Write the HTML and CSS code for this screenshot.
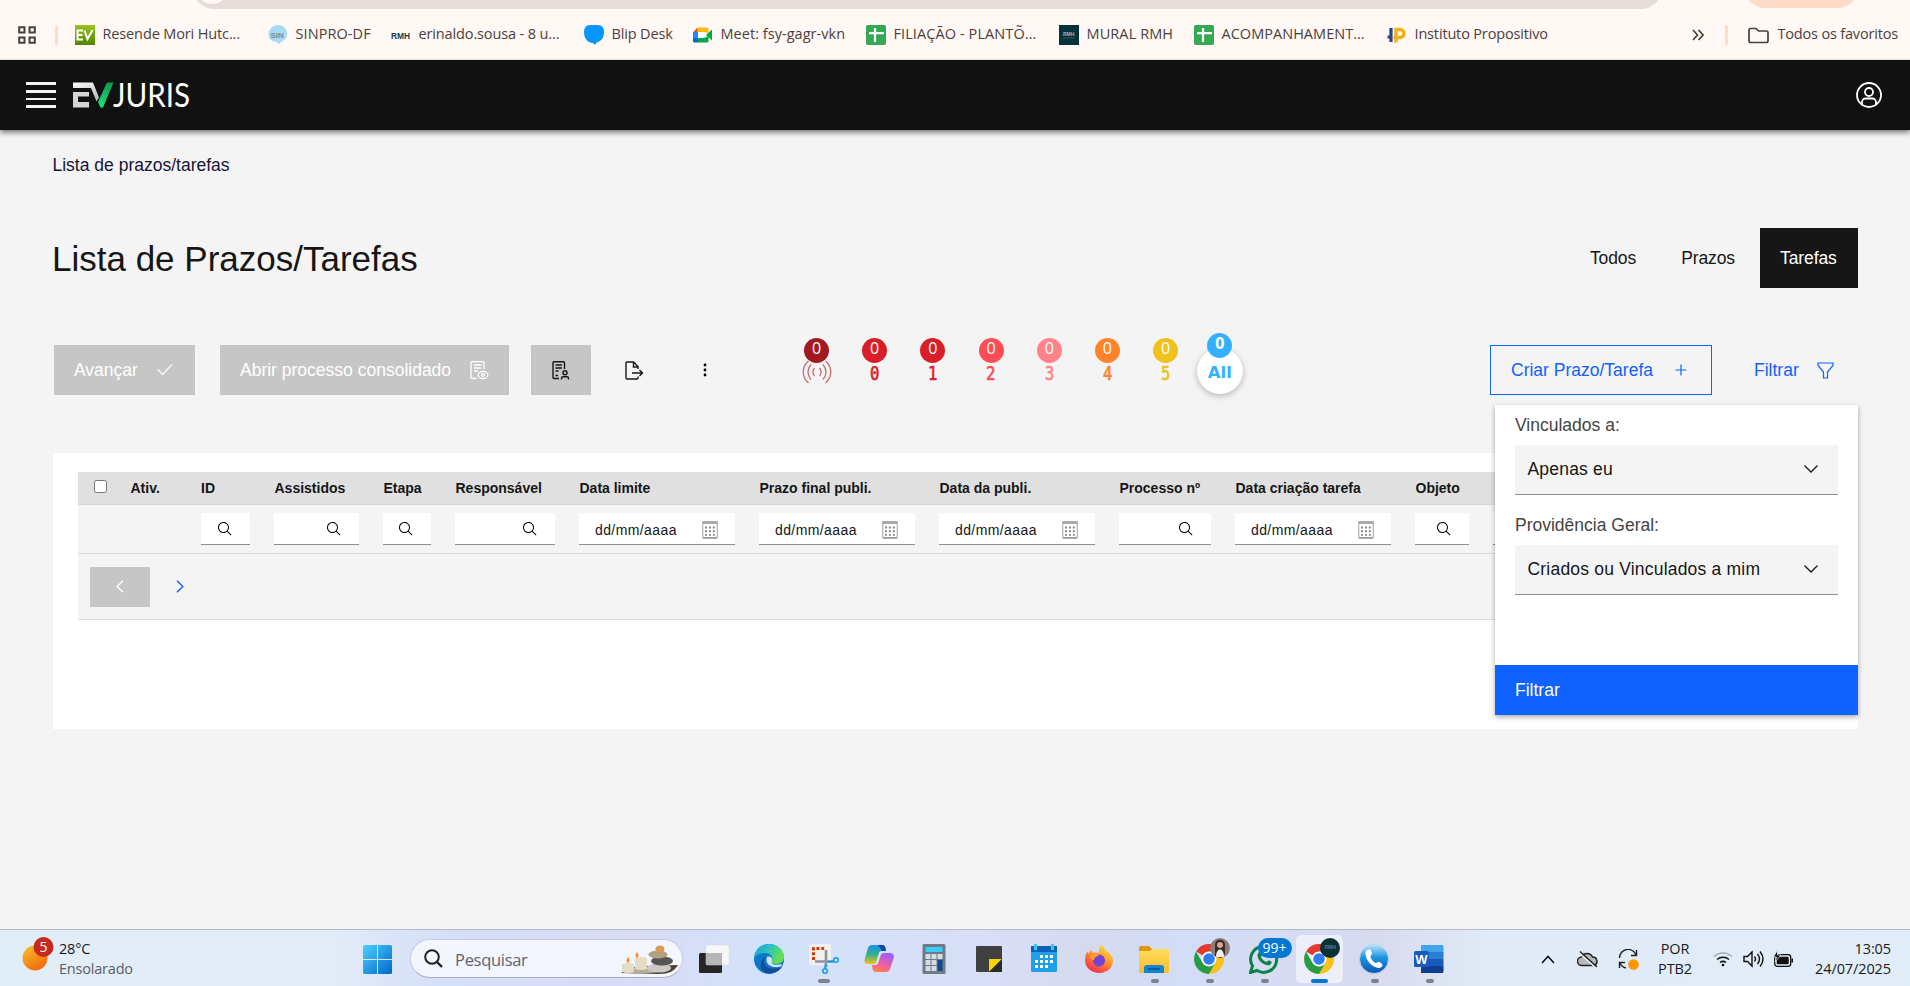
FILE: index.html
```html
<!DOCTYPE html>
<html lang="pt-BR">
<head>
<meta charset="utf-8">
<title>Lista de Prazos/Tarefas</title>
<link rel="stylesheet" href="styles.css">
</head>
<body>
<svg class="defs" aria-hidden="true">
  <defs>
    <linearGradient id="gEv" x1="0" y1="0" x2="0" y2="1"><stop offset="0" stop-color="#9ac51d"/><stop offset="1" stop-color="#4e8500"/></linearGradient>
    <linearGradient id="gSun" x1="0" y1="0" x2=".6" y2="1"><stop offset="0" stop-color="#f4c430"/><stop offset="1" stop-color="#f36a0c"/></linearGradient>
    <linearGradient id="gWin" x1="0" y1="0" x2="1" y2="1"><stop offset="0" stop-color="#4cd0fb"/><stop offset="1" stop-color="#0067cc"/></linearGradient>
    <linearGradient id="gGray" x1="0" y1="0" x2=".4" y2="1"><stop offset="0" stop-color="#fff"/><stop offset="1" stop-color="#bbb"/></linearGradient>
    <linearGradient id="gGreen" x1="0" y1="0" x2="0" y2="1"><stop offset="0" stop-color="#0a9a50"/><stop offset="1" stop-color="#25e07a"/></linearGradient>
    <linearGradient id="gEdge" x1="0" y1="0" x2="1" y2=".4"><stop offset="0" stop-color="#1b9de2"/><stop offset=".5" stop-color="#2cc3c0"/><stop offset="1" stop-color="#66e052"/></linearGradient>
    <linearGradient id="gCopA" x1="0" y1="0" x2="0" y2="1"><stop offset="0" stop-color="#1b8ff0"/><stop offset=".5" stop-color="#2fb28a"/><stop offset="1" stop-color="#f2c21b"/></linearGradient>
    <linearGradient id="gCopB" x1="0" y1="1" x2=".5" y2="0"><stop offset="0" stop-color="#ff8a3c"/><stop offset=".5" stop-color="#f0609c"/><stop offset="1" stop-color="#a55df0"/></linearGradient>
    <linearGradient id="gFox" x1=".8" y1="0" x2=".2" y2="1"><stop offset="0" stop-color="#ffe43d"/><stop offset=".5" stop-color="#ff8a2a"/><stop offset="1" stop-color="#f0205a"/></linearGradient>
    <linearGradient id="gFold" x1="0" y1="0" x2="0" y2="1"><stop offset="0" stop-color="#ffdb5c"/><stop offset="1" stop-color="#f9bd2c"/></linearGradient>
    <linearGradient id="gPhone" x1="0" y1="0" x2="0" y2="1"><stop offset="0" stop-color="#b5e6fa"/><stop offset=".45" stop-color="#1b95e0"/><stop offset="1" stop-color="#0a55b0"/></linearGradient>
    <symbol id="search" viewBox="0 0 32 32"><path d="M29 27.6l-7.6-7.6A11 11 0 1 0 20 21.400L27.600 29zM4 13a9 9 0 1 1 9 9 9 9 0 0 1-9-9z"/></symbol>
    <symbol id="chev" viewBox="0 0 16 16"><path d="M1.500 4.500 8 11l6.500-6.500" fill="none" stroke="currentColor" stroke-width="1.300"/></symbol>
    <symbol id="cal" viewBox="0 0 16 19"><rect x=".7" y="1.700" width="14.600" height="16" rx="1" fill="#fff" stroke="#b5b5b5" stroke-width="1.300"/><path d="M.5 2.500h15" stroke="#aaa" stroke-width="3"/><path d="M1 18h14" stroke="#888" stroke-width="1.200"/><path d="M3 7.500h10M3 11.200h10M3 14.900h10" stroke="#888" stroke-width="1.900" stroke-dasharray="2 1.900"/></symbol>
    <symbol id="sheet" viewBox="0 0 20 20"><rect width="20" height="20" rx="2" fill="#34a853"/><path d="M3 8.200h15M9 3v14" stroke="#fff" stroke-width="2.200"/></symbol>
    <symbol id="chrome" viewBox="0 0 30 30"><path d="M15 15 2.010 7.500A15 15 0 0 1 28 7.500H15z" fill="#e33b2e"/><path d="M15 15 28 7.500A15 15 0 0 1 15 30l6.500-11.300z" fill="#fbc116"/><path d="M2.010 7.500A15 15 0 0 0 15 30l6.500-11.250L15 15 8.500 18.750z" fill="#2a9c46"/><circle cx="15" cy="15" r="7.500" fill="#fff"/><circle cx="15" cy="15" r="5.800" fill="#2d7ff0"/></symbol>
  </defs>
</svg>

<div class="browser">
  <div class="omnibox"><span class="omni-site"></span></div>
  <div class="profile-chip"></div>
  <div class="bookmarks">
    <svg class="apps" viewBox="0 0 18 18"><path d="M1.200 1.200h5.300v5.300H1.200zM11.500 1.200h5.300v5.300h-5.300zM1.200 11.500h5.300v5.300H1.200zM11.500 11.500h5.300v5.300h-5.300z" fill="none" stroke="#4b3f3c" stroke-width="2"/></svg>
    <span class="bm-div"></span>
    <div class="bm-list">
      <div class="bm"><svg viewBox="0 0 20 20"><rect width="20" height="20" fill="url(#gEv)"/><path d="M8 5.500H2.500v9H8M3 10h4.500M9.500 5.500l3 8.500 5-9" fill="none" stroke="#fff" stroke-width="2"/></svg><span class="t1">Resende Mori Hutc...</span></div>
      <div class="bm"><svg viewBox="0 0 20 20"><path d="M10 0c6 0 9 4 9 9s-4 7-6 8c-1 .6-1 2-2 2s-1-1.500-3-2C3 16 .5 14 .5 9.500S4 0 10 0z" fill="#a5dbf5"/><text x="2.500" y="13" class="sin">SIN</text></svg><span class="t2">SINPRO-DF</span></div>
      <div class="bm"><svg viewBox="0 0 20 20"><text x="0" y="13.500" class="rmh" textLength="19" lengthAdjust="spacingAndGlyphs">RMH</text></svg><span class="t3">erinaldo.sousa - 8 u...</span></div>
      <div class="bm"><svg viewBox="0 0 20 20"><path d="M6 0h8c4 0 6 3 6 7 0 6-3 9.500-7.500 10.500L11 20l-2-2C3 17.500 0 13 0 7c0-4 2-7 6-7z" fill="#0796ff"/></svg><span class="t4">Blip Desk</span></div>
      <div class="bm"><svg viewBox="0 0 20 20"><path d="M4.500 2.500h9a2 2 0 0 1 2 2V8l-4-1H4.500z" fill="#fbbc04"/><path d="M4.500 2.500v5H0z" fill="#ea4335"/><path d="M0 7h5v6H0z" fill="#2684fc"/><path d="M0 13h5v4.500H1.500A1.500 1.500 0 0 1 0 16z" fill="#0066da"/><path d="M5 13h6l4.500-2V16a1.500 1.500 0 0 1-1.500 1.500H5zM13 10l6-5.500v11z" fill="#00a846"/><path d="M5 7h6v6H5z" fill="#fff"/></svg><span class="t5">Meet: fsy-gagr-vkn</span></div>
      <div class="bm"><svg viewBox="0 0 20 20"><use href="#sheet"/></svg><span class="t6">FILIAÇÃO - PLANTÕ...</span></div>
      <div class="bm"><svg viewBox="0 0 20 20"><rect width="20" height="20" fill="#06323a"/><text x="4" y="10.500" class="mini">RMH</text><path d="M4 13h12" stroke="#3e6368" stroke-width=".8"/></svg><span class="t7">MURAL RMH</span></div>
      <div class="bm"><svg viewBox="0 0 20 20"><use href="#sheet"/></svg><span class="t8">ACOMPANHAMENT...</span></div>
      <div class="bm"><svg viewBox="0 0 20 20"><path d="M4 3v14M.5 12H4" stroke="#2a4383" stroke-width="3.200" fill="none"/><path d="M9 17.500V4.500h4a4 4 0 0 1 0 8H6.500" stroke="#f0b016" stroke-width="3.400" fill="none"/></svg><span class="t9">Instituto Propositivo</span></div>
    </div>
    <svg class="more" viewBox="0 0 12 12"><path d="M1 1l4.500 5L1 11M6.500 1 11 6l-4.500 5" fill="none" stroke="#4b3f3c" stroke-width="1.700"/></svg>
    <span class="bm-div"></span>
    <svg class="folder" viewBox="0 0 21 17"><path d="M1 3a1.500 1.500 0 0 1 1.500-1.500H8l2.500 2.500h8A1.500 1.500 0 0 1 20 5.500V14a1.500 1.500 0 0 1-1.500 1.500h-16A1.500 1.500 0 0 1 1 14z" fill="none" stroke="#4b3f3c" stroke-width="1.700"/></svg>
    <span class="all-fav">Todos os favoritos</span>
  </div>
</div>

<header class="topbar">
  <div class="burger"><i></i><i></i><i></i><i></i></div>
  <div class="logo">
    <svg viewBox="0 0 41 26"><path d="M0 .5h20l6 15-2.500 4L18 6H0z" fill="url(#gGray)"/><path d="M0 10h16v4.500H5V20h11v5.500H0z" fill="#d5d5d5"/><path d="M34 .5h6.500L30 25.500h-2.500L25 20z" fill="url(#gGreen)"/></svg>
    <svg class="juris" viewBox="0 0 80 26"><text x="0" y="25" textLength="77" lengthAdjust="spacingAndGlyphs">JURIS</text></svg>
  </div>
  <svg class="user" viewBox="0 0 26 26" fill="none" stroke="#fff" stroke-width="1.800"><circle cx="13" cy="13" r="12"/><circle cx="13" cy="10" r="4"/><path d="M6 22.500V20a3.500 3.500 0 0 1 3.500-3.500h7A3.500 3.500 0 0 1 20 20v2.500"/></svg>
</header>

<main class="page">
  <nav class="crumb">Lista de prazos/tarefas</nav>
  <div class="title-row">
    <h1>Lista de Prazos/Tarefas</h1>
    <div class="tabs"><span>Todos</span><span>Prazos</span><span class="on">Tarefas</span></div>
  </div>

  <div class="toolbar">
    <button class="btn gray adv">Avançar<svg width="16" height="12" viewBox="0 0 16 12"><path d="M.7 5.500 5.500 10.500 15 .7" fill="none" stroke="#fff" stroke-width="1.200"/></svg></button>
    <button class="btn gray open">Abrir processo consolidado<svg width="19" height="19" viewBox="0 0 19 19" fill="none" stroke="#fff" stroke-width="1.300"><path d="M6.500 17.500H2a1 1 0 0 1-1-1V1.700a1 1 0 0 1 1-1h11a1 1 0 0 1 1 1V8M4 4h7.500M4 7h7.500M4 10h4"/><ellipse cx="13" cy="14" rx="4.800" ry="3.600"/><circle cx="13" cy="14" r="1.300"/></svg></button>
    <button class="btn gray user-doc"><svg width="18" height="19" viewBox="0 0 18 19" fill="none" stroke="#161616" stroke-width="1.400"><path d="M7 17.500H2a1 1 0 0 1-1-1V1.700a1 1 0 0 1 1-1h9.500a1 1 0 0 1 1 1V8M3.500 4h6.500M3.500 7h6.500M3.500 10h3M3.500 14.500H6"/><circle cx="13" cy="11.800" r="2"/><path d="M9.500 18.500v-1.200a1.600 1.600 0 0 1 1.600-1.600h3.800a1.600 1.600 0 0 1 1.600 1.600v1.200"/></svg></button>
    <svg class="export" viewBox="0 0 19 19" fill="none" stroke="#161616" stroke-width="1.400"><path d="M13 15.500V17a1 1 0 0 1-1 1H2a1 1 0 0 1-1-1V2a1 1 0 0 1 1-1h6.500L13 5.500V8M8.500 1v5H13M7 12h10M14.500 9l3 3-3 3"/></svg>
    <svg class="dots" viewBox="0 0 4 14"><circle cx="2" cy="2" r="1.400"/><circle cx="2" cy="7" r="1.400"/><circle cx="2" cy="12" r="1.400"/></svg>

    <div class="levels">
      <div class="lv c0"><b>0</b><svg viewBox="0 0 30 24" fill="none" stroke="#c26c70" stroke-width="1.300"><path d="M6.500 1C-.5 7-.5 17 6.500 23M9 4.500c-4 4.500-4 10.500 0 15M12.500 8c-2 2.500-2 5.500 0 8M17.500 8c2 2.500 2 5.500 0 8M21 4.500c4 4.500 4 10.500 0 15M23.500 1c7 6 7 16 0 22"/></svg></div>
      <div class="lv c1"><b>0</b><em>0</em></div>
      <div class="lv c1"><b>0</b><em>1</em></div>
      <div class="lv c2"><b>0</b><em>2</em></div>
      <div class="lv c3"><b>0</b><em>3</em></div>
      <div class="lv c4"><b>0</b><em>4</em></div>
      <div class="lv c5"><b>0</b><em>5</em></div>
      <div class="all"><span>All</span><b>0</b></div>
    </div>

    <button class="btn outline">Criar Prazo/Tarefa<svg width="12" height="12" viewBox="0 0 12 12"><path d="M6 .5v11M.5 6h11" stroke="#0f62fe" stroke-width="1.200"/></svg></button>
    <button class="btn ghost">Filtrar<svg width="17" height="17" viewBox="0 0 17 17"><path d="M1 1h15v2.500L10.500 10v6h-4v-6L1 3.500z" fill="none" stroke="#0f62fe" stroke-width="1.200"/></svg></button>
  </div>

  <section class="panel">
    <div class="table">
      <div class="row head">
        <span class="ck"><i></i></span><span>Ativ.</span><span>ID</span><span>Assistidos</span><span>Etapa</span><span>Responsável</span><span>Data limite</span><span>Prazo final publi.</span><span>Data da publi.</span><span>Processo nº</span><span>Data criação tarefa</span><span>Objeto</span><span></span>
      </div>
      <div class="row filters">
        <span></span><span></span>
        <div class="in"><svg><use href="#search"/></svg></div>
        <div class="in"><svg><use href="#search"/></svg></div>
        <div class="in"><svg><use href="#search"/></svg></div>
        <div class="in"><svg><use href="#search"/></svg></div>
        <div class="in date">dd/mm/aaaa<svg><use href="#cal"/></svg></div>
        <div class="in date">dd/mm/aaaa<svg><use href="#cal"/></svg></div>
        <div class="in date">dd/mm/aaaa<svg><use href="#cal"/></svg></div>
        <div class="in"><svg><use href="#search"/></svg></div>
        <div class="in date">dd/mm/aaaa<svg><use href="#cal"/></svg></div>
        <div class="in"><svg><use href="#search"/></svg></div>
        <div class="in"></div>
      </div>
      <div class="pager">
        <button class="prev"><svg width="8" height="13" viewBox="0 0 8 13"><path d="M7 .7 1.200 6.500 7 12.300" fill="none" stroke="#fff" stroke-width="1.300"/></svg></button>
        <svg width="8" height="13" viewBox="0 0 8 13"><path d="M1 .7l5.800 5.800L1 12.300" fill="none" stroke="#0f62fe" stroke-width="1.400"/></svg>
      </div>
    </div>
  </section>

  <aside class="popup">
    <label>Vinculados a:</label>
    <div class="select">Apenas eu<svg><use href="#chev"/></svg></div>
    <label>Providência Geral:</label>
    <div class="select">Criados ou Vinculados a mim<svg><use href="#chev"/></svg></div>
    <button class="apply">Filtrar</button>
  </aside>
</main>

<footer class="taskbar">
  <div class="weather">
    <svg width="40" height="42" viewBox="0 0 40 42"><circle cx="15" cy="27" r="12.500" fill="url(#gSun)"/><circle cx="23.500" cy="16" r="10" fill="#c42b1c"/><text x="23.500" y="21" class="wbadge">5</text></svg>
    <div class="wtext"><span>28°C</span><span>Ensolarado</span></div>
  </div>
  <svg class="win" viewBox="0 0 29 29"><path d="M1.500 0H14v14H0V1.500A1.500 1.500 0 0 1 1.500 0zM15 0h12.500A1.500 1.500 0 0 1 29 1.500V14H15zM0 15h14v14H1.500A1.500 1.500 0 0 1 0 27.500zM15 15h14v12.500a1.500 1.500 0 0 1-1.500 1.500H15z" fill="url(#gWin)"/></svg>
  <div class="search">
    <svg width="19" height="19" viewBox="0 0 19 19"><circle cx="8" cy="8" r="6.800" fill="none" stroke="#222" stroke-width="2"/><path d="m13 13 5 5" stroke="#222" stroke-width="2.400"/></svg>
    <span>Pesquisar</span>
    <svg class="zen" viewBox="0 0 58 30"><path d="M0 28c8-7 22-7 28-7s20-1 29-1c-4 6-8 9-20 9z" fill="#4a4234"/><path d="M2 27c6 2 22 2 34 0l-8-4H6z" fill="#b5ae98"/><path d="M1 19q6-2 12 0v8q-6 2-12 0zM14 13q6-2 12 0v11q-6 2-12 0z" fill="#e5dcc6"/><path d="M7 12q3 4 0 6-3-2 0-6zM16 7q3 4 0 6-3-2 0-6z" fill="#f58a2c"/><ellipse cx="38" cy="23" rx="12" ry="4.500" fill="#ccc9c6"/><ellipse cx="41" cy="16" rx="11" ry="4.500" fill="#555554"/><ellipse cx="37" cy="9.500" rx="9.500" ry="4" fill="#b3a083"/><ellipse cx="39" cy="4" rx="4.500" ry="3.500" fill="#d69b5d"/></svg>
  </div>
  <div class="apps-row">
    <div class="app"><svg viewBox="0 0 30 30"><rect y="9" width="23" height="20" rx="1.500" fill="#252525"/><rect x="7" y="1" width="23" height="20" rx="1.500" fill="#f7f7f7" stroke="#ddd" stroke-width=".5"/><rect x="7" y="9" width="16" height="12" fill="#b6b6b6"/></svg></div>
    <div class="app"><svg viewBox="0 0 30 30"><circle cx="15" cy="15" r="15" fill="#0b78c8"/><path d="M0 14C1 5 7 0 15 0c9 0 15 6 15 13 0 5-4 7-8 7-3 0-5-1-4-3 2-4-2-8-7-8C6 9 2 11 0 14z" fill="url(#gEdge)"/><path d="M10 17c0 6 6 10 18 6-5 7-15 9-20 3-3-4-1-11 4-13-1 1-2 2-2 4z" fill="#124e9c"/><path d="M13 13c3-1.500 6 .5 5 4-1 3 2 5 10 3l-1 2.500c-8 2.500-17-2-14-9.500z" fill="#d5def6"/></svg></div>
    <div class="app run"><svg viewBox="0 0 30 30"><rect width="22" height="21" rx="2" fill="#f0f0f0"/><path d="M4.500 16V4.500h12" fill="none" stroke="#d83b01" stroke-width="3" stroke-dasharray="3 1.800"/><path d="M17 6v17M6 17.500h19" stroke="#8d939b" stroke-width="2.600"/><circle cx="27" cy="16" r="2.300" fill="none" stroke="#1c9de0" stroke-width="1.600"/><circle cx="16" cy="27" r="2.300" fill="none" stroke="#1c9de0" stroke-width="1.600"/><path d="m19 18 6-1M17 20l-1 5" stroke="#1c9de0" stroke-width="2"/></svg></div>
    <div class="app"><svg viewBox="0 0 30 30"><path d="M8 1h10c2 0 3 1 3.500 3L22 7h-4c-2 0-3 1-3.500 3l-2 7c-.5 2-1.500 3-4 3H4c-3 0-4-2-3.300-5L4 4c.7-2 2-3 4-3z" fill="url(#gCopA)"/><path d="M22 28H12c-2 0-3-1-3.500-3L8 21h3c2 0 3-1 3.500-3l2-6c.5-2 1.500-3 4-3H26c3 0 4.500 2 3.700 5L26 25c-.7 2-2 3-4 3z" fill="url(#gCopB)"/><path d="M14 1h4c2 0 3 1 3.500 3L22 7h-4z" fill="#1447ae"/></svg></div>
    <div class="app"><svg viewBox="0 0 30 30"><rect x="3.500" width="23" height="30" rx="1.500" fill="#6e7a85"/><path d="M6.500 3h17v5h-17z" fill="#3ccbf4"/><path d="M6.500 10h5v5h-5zM12.500 10h5v5h-5zM18.500 10h5v5h-5zM6.500 16h5v5h-5zM12.500 16h5v5h-5zM6.500 22h5v5h-5zM12.500 22h5v5h-5z" fill="#d5dde3"/><path d="M18.500 16h5v11h-5z" fill="#124b8d"/></svg></div>
    <div class="app"><svg viewBox="0 0 30 30"><rect x="2" y="2" width="26" height="26" rx="1" fill="#404040"/><path d="M15 15h13L15 28z" fill="#fdd400"/><path d="M28 15v13H15z" fill="#2b2b2b"/></svg></div>
    <div class="app"><svg viewBox="0 0 30 30"><rect x="2" y="2" width="26" height="26" rx="1.500" fill="#1e9fe8"/><path d="M2 2h26v6H2z" fill="#0a62b5"/><path d="M6.500 0v6M23.500 0v6" stroke="#45c4f2" stroke-width="3"/><path d="M11 12.500h13M6 17.500h18M6 22.500h13" stroke="#fff" stroke-width="3" stroke-dasharray="3 2"/></svg></div>
    <div class="app"><svg viewBox="0 0 30 30"><path d="M17 1c3 2 4 4 5 6 3 1 7 5 7 10 0 7-6 12-13.500 12S1 24 1 16c0-4 1-7 3-9v3l3-4 2 3c2-1 4-1 6 0 0-3 0-6 2-8z" fill="url(#gFox)"/><circle cx="15" cy="16.500" r="6" fill="#7542d5"/><path d="M6 12c3-3 7-2 9 0-3 0-5 2-5 4-2 0-4-2-4-4z" fill="#ffa22b"/></svg></div>
    <div class="app run"><svg viewBox="0 0 30 30"><path d="M0 4a2 2 0 0 1 2-2h8l3 3v4H0z" fill="#dd9a0e"/><path d="M0 7h11l2-2h15a2 2 0 0 1 2 2v21a1 1 0 0 1-1 1H1a1 1 0 0 1-1-1z" fill="url(#gFold)"/><path d="M5 29v-5a3 3 0 0 1 3-3h14a3 3 0 0 1 3 3v5z" fill="#1583d3"/><path d="M9 25h12" stroke="#0b4e93" stroke-width="1.600"/></svg></div>
    <div class="app run"><svg viewBox="0 0 30 30"><use href="#chrome"/></svg><span class="avatar"><svg viewBox="0 0 20 20"><circle cx="10" cy="10" r="10" fill="#8d7c78"/><path d="M5 18V7c0-7 10-7 10 0v9l-4 4z" fill="#3a2c28"/><circle cx="10" cy="7" r="3" fill="#d7a78e"/><path d="M6 19c0-10 8-10 8 0z" fill="#eee"/></svg></span></div>
    <div class="app run"><svg viewBox="0 0 30 30"><path d="M1.500 28.500 3.500 22A13 13 0 1 1 8 26.500z" fill="none" stroke="#0d8247" stroke-width="3"/><path d="M10 8c2-1 2 0 3 2 .7 1.500-1 2-1 3 1 2 3 4 5 5 1 0 2-2 3-1.500 3 1 3 1.500 2 3.500-3 4-13-2-13.500-8 0-2 .5-3 1.500-4z" fill="#0d8247"/></svg><span class="count">99+</span></div>
    <div class="app run active"><svg viewBox="0 0 30 30"><use href="#chrome"/></svg><span class="avatar"><svg viewBox="0 0 20 20"><circle cx="10" cy="10" r="10" fill="#0b3134"/><text x="4.500" y="11" class="mini dim">RMH</text></svg></span></div>
    <div class="app run"><svg viewBox="0 0 30 30"><circle cx="15" cy="15" r="14.500" fill="url(#gPhone)" stroke="#bcd3ec"/><path d="M8 6c3-2 4 0 5 3 .5 2-2 2-1.500 4 1 3 3 5 5 6 2 .5 2-2 4-1 3 2 4 3 2 5-6 4-16-6-16-13 0-2 0-3 1.500-4z" fill="#fff"/></svg></div>
    <div class="app run"><svg viewBox="0 0 30 30"><path d="M7 1h21a1.500 1.500 0 0 1 1.500 1.500V9H7z" fill="#41a5ee"/><path d="M7 8h22.500v7H7z" fill="#2b7cd3"/><path d="M7 15h22.500v7H7z" fill="#185abd"/><path d="M7 22h22.500v5.500A1.500 1.500 0 0 1 28 29H7z" fill="#103f91"/><rect y="7" width="15" height="16" rx="1.500" fill="#185abd"/><text x="7.500" y="19.500" class="word">W</text></svg></div>
  </div>
  <div class="tray">
    <svg class="up" viewBox="0 0 14 9"><path d="m1 8 6-6.500L13 8" fill="none" stroke="#111" stroke-width="1.600"/></svg>
    <svg class="cloud" viewBox="0 0 21 17"><path d="M5 14.500a4.200 4.200 0 0 1-.5-8.500A6 6 0 0 1 15.500 6a4.300 4.300 0 0 1 1 8.500z" fill="#b5b8bc" stroke="#222" stroke-width="1.500"/><path d="m1.500 1.500 17 15" stroke="#e8eff8" stroke-width="1.600"/><path d="m3 .5 17 15.500" stroke="#222" stroke-width="1.400"/></svg>
    <svg class="sync" viewBox="0 0 21 21"><path d="M1.500 9A8.500 8.500 0 0 1 18 6M18.500 1v5.500H13M8 19a8.500 8.500 0 0 1-6-5M1.500 19v-5.500H7" fill="none" stroke="#222" stroke-width="1.400"/><circle cx="15.500" cy="15.500" r="5.300" fill="#ff9500"/></svg>
    <div class="two lang"><span>POR</span><span>PTB2</span></div>
    <svg class="wifi" viewBox="0 0 20 16" fill="none" stroke="#111" stroke-width="1.500"><path d="M1 5.500a13 13 0 0 1 18 0" stroke="#a6adb5"/><path d="M4 8.500a9 9 0 0 1 12 0M7 11.500a5 5 0 0 1 6 0"/><circle cx="10" cy="14" r="1.300" fill="#111" stroke="none"/></svg>
    <svg class="snd" viewBox="0 0 21 18" fill="none" stroke="#111" stroke-width="1.400"><path d="M1 6.500h3.500L9 2v14l-4.500-4.500H1z"/><path d="M11.500 6.500q2 2.500 0 5M14.500 4q4 5 0 10M17 1.500q6 7.500 0 15"/></svg>
    <svg class="bat" viewBox="0 0 21 18"><rect x="1.700" y="4.700" width="16" height="11.600" rx="2.500" fill="none" stroke="#111" stroke-width="1.300"/><rect x="3.700" y="6.700" width="12" height="7.600" rx="1" fill="#111"/><path d="M18.500 8.500h1.500v4h-1.500z" fill="#111"/><path d="M4.500 0 .5 7h3L2 12l6-7H4.500z" fill="#111" stroke="#e6eff8" stroke-width=".8"/></svg>
    <div class="two clock"><span>13:05</span><span>24/07/2025</span></div>
  </div>
</footer>
</body>
</html>
```
FILE: styles.css
```css
* { box-sizing: border-box; }
body {
  margin: 0;
  width: 1910px;
  height: 986px;
  overflow: hidden;
  display: flex;
  flex-direction: column;
  background: #f4f4f4;
  font-family: "Liberation Sans", Arial, sans-serif;
  font-size: 17.5px;
  color: #161616;
}
svg { display: block; flex: none; }
.defs { position: absolute; width: 0; height: 0; }

/* browser chrome */
.browser {
  position: relative;
  flex: none;
  height: 60px;
  background: #fff8f5;
  border-bottom: 1px solid #eeddd5;
  font-family: "Open Sans", "Noto Sans", sans-serif;
  font-size: 14.5px;
  color: #4b3f3c;
}
.omnibox { position: absolute; left: 193px; top: -33px; width: 1469px; height: 42px; border-radius: 21px; background: #e8dcda; }
.omni-site { position: absolute; left: 3px; bottom: 5px; width: 32px; height: 32px; border-radius: 50%; background: #fff8f5; }
.profile-chip { position: absolute; left: 1745px; top: -32px; width: 113px; height: 40px; border-radius: 20px; background: #ffdbc9; }
.bookmarks { display: flex; align-items: center; height: 60px; padding: 9px 0 0 18px; }
.apps { width: 18px; height: 18px; margin-right: 19px; }
.bm-div { width: 3px; height: 20px; border-radius: 2px; background: #ffdbc9; }
.bm-list {
  display: grid;
  grid-template-columns: 193px 123px 193px 109px 173px 193px 135px 193px 305px;
  margin-left: 17px;
}
.bm { display: flex; align-items: center; gap: 7.500px; white-space: nowrap; }
.bm svg { width: 20px; height: 20px; }
.bm span, .all-fav { margin-top: -2px; white-space: nowrap; line-height: 20px; }
.t1 { letter-spacing: -0.13px; }
.t2 { letter-spacing: .08px; }
.t3 { letter-spacing: -0.13px; }
.t4 { letter-spacing: -0.15px; }
.t5 { letter-spacing: .04px; }
.t6 { letter-spacing: .09px; }
.t7 { letter-spacing: .1px; }
.t8 { letter-spacing: .03px; }
.t9 { letter-spacing: -0.16px; }
.all-fav { letter-spacing: -0.18px; }
.more { width: 12px; height: 12px; margin-right: 21px; }
.folder { width: 21px; height: 17px; margin: 1px 9px 0 19.500px; }
.sin { font: bold 8px "Liberation Sans"; fill: #7a8f9c; }
.rmh { font: bold 9px "Liberation Sans"; fill: #123b3c; }
.mini { font: bold 5px "Liberation Sans"; fill: #a5b9bb; }
.dim { fill: #5d7a7c; }

/* application header */
.topbar {
  flex: none;
  display: flex;
  align-items: center;
  height: 70px;
  padding: 0 28px 0 26px;
  background: #111;
  box-shadow: 0 2px 6px rgba(0, 0, 0, .6);
}
.burger { display: grid; gap: 5px; width: 30px; }
.burger i { height: 2.700px; background: #f4f4f4; }
.logo { display: flex; align-items: center; margin-left: 17px; }
.logo svg { width: 41px; height: 26px; }
.logo .juris { width: 80px; margin-left: -1px; font: 33.500px "Lato", sans-serif; fill: #fff; }
.user { width: 26px; height: 26px; margin-left: auto; }

/* page */
.page { position: relative; flex: 1; padding: 0 52px 0 53px; }
.crumb { padding-top: 24px; margin-left: -0.500px; line-height: 22px; color: #161633; }
.title-row { display: flex; justify-content: space-between; align-items: center; height: 60px; margin-top: 52px; }
h1 { margin: 2px 0 0 -1px; font-size: 35px; font-weight: 400; letter-spacing: 0; }
.tabs { display: flex; align-self: stretch; gap: 5px; }
.tabs span { display: flex; align-items: center; padding: 0 20px; letter-spacing: -0.1px; }
.tabs .on { background: #161616; color: #fff; width: 98px; }
.toolbar { display: flex; align-items: center; height: 50px; margin: 57px 0 0 1px; }
.btn {
  flex: none;
  display: flex;
  align-items: center;
  justify-content: space-between;
  height: 50px;
  border: 0;
  padding: 0 20px;
  background: none;
  font: inherit;
  white-space: nowrap;
}
.gray { background: #c6c6c6; color: #fff; }
.adv { width: 141px; padding-right: 22px; }
.open { width: 289px; margin-left: 25px; }
.user-doc { width: 60px; margin-left: 22px; justify-content: center; }
.export { width: 19px; height: 19px; margin-left: 34px; }
.dots { width: 4px; height: 14px; margin-left: 59px; }
.outline { width: 222px; border: 1px solid #0f62fe; color: #0f62fe; padding-right: 24px; }
.ghost { color: #0f62fe; width: 146px; padding: 0 24px 0 42px; }

.levels { display: flex; margin: -8px auto 0 94.500px; height: 62px; align-items: flex-start; }
.lv { display: flex; flex-direction: column; align-items: center; width: 30px; margin-right: 28.200px; padding-top: 3px; }
.lv b, .all b {
  width: 25px;
  height: 25px;
  border-radius: 50%;
  background: currentColor;
  text-align: center;
  font: 16px/21px "Open Sans", sans-serif;
}
.lv b::first-letter, .all b::first-letter { color: #fff; }
.lv em { font: 19px/24px "DejaVu Sans Mono", monospace; -webkit-text-stroke: .7px currentColor; transform: scaleX(.82); margin-top: -2px; }
.lv svg { width: 30px; height: 24px; margin-top: -3px; }
.c0 { color: #a2191f; }
.c1 { color: #da1e28; }
.c2 { color: #fa4d56; }
.c3 { color: #ff8389; }
.c4 { color: #ff832b; }
.c5 { color: #f1c21b; }
.all {
  position: relative;
  width: 46px;
  height: 46px;
  margin: 13px 0 0 -12px;
  border-radius: 50%;
  background: #fff;
  color: #33b1ff;
  box-shadow: 0 2px 6px rgba(0, 0, 0, .25);
  text-align: center;
  font: bold 16.500px/49px "DejaVu Sans", sans-serif;
}
.all b { position: absolute; left: 10.500px; top: -15px; font-weight: 700; }

/* table */
.panel { height: 276px; margin-top: 58px; padding: 19px 0 0 25px; background: #fff; }
.row {
  display: grid;
  grid-template-columns: 28.500px 46.500px 49.500px 85px 48px 100px 156px 156px 156px 92px 156px 54px 300px;
  column-gap: 24px;
  overflow: hidden;
}
.head { height: 33px; align-items: center; background: #e0e0e0; border-bottom: 1px solid #d8d8d8; font-size: 14px; font-weight: 700; white-space: nowrap; }
.ck i { display: block; width: 13px; height: 13px; margin: -3px 0 0 16px; background: #fff; border: 1px solid #767676; border-radius: 2.500px; }
.filters { grid-template-columns: 28.500px 46.500px 49px 85px 48px 100px 156px 156px 156px 92px 156px 54px 300px; height: 49px; padding-top: 8px; background: #f4f4f4; border-bottom: 1px solid #dcdcdc; }
.in { display: flex; align-items: center; justify-content: flex-end; height: 32px; padding: 0 17px 0 0; background: #fff; border-bottom: 1px solid #8d8d8d; }
.in svg { width: 16px; height: 16px; }
.date { padding: 2px 17px 0 16px; justify-content: space-between; font-size: 14px; letter-spacing: .4px; }
.date svg { width: 16px; height: 19px; margin-top: -1px; }
.pager { display: flex; align-items: center; height: 66px; padding-left: 12px; background: #f4f4f4; border-bottom: 1px solid #dcdcdc; }
.prev { display: flex; align-items: center; justify-content: center; width: 60px; height: 40px; margin-right: 26px; border: 0; background: #c6c6c6; }

/* filter menu */
.popup {
  position: absolute;
  left: 1495px;
  top: 275px;
  width: 363px;
  height: 310px;
  display: flex;
  flex-direction: column;
  padding-top: 8px;
  background: #fff;
  box-shadow: 0 2px 5px rgba(0, 0, 0, .35);
}
.popup label { margin-left: 20px; line-height: 24px; color: #444; }
.select {
  display: flex;
  align-items: center;
  justify-content: space-between;
  height: 50px;
  margin: 8px 20px 18px;
  padding: 0 19px 1px 12.500px;
  background: #f4f4f4;
  border-bottom: 1px solid #8d8d8d;
  letter-spacing: .2px;
}
.select svg { width: 16px; height: 16px; }
.apply { height: 50px; margin-top: auto; padding: 0 20px; border: 0; background: #0f62fe; color: #fff; font: inherit; text-align: left; }

/* taskbar */
.taskbar {
  position: relative;
  flex: none;
  display: flex;
  align-items: center;
  height: 57px;
  border-top: 1px solid #b3bac7;
  background: linear-gradient(90deg, #e1edf7 0, #e3edf8 17%, #d5dff8 23%, #d8dcf4 33%, #d2e2fa 40%, #d8def6 52%, #d6daee 57%, #d2ddf8 62%, #d8daee 72%, #e0ebf7 78%, #e1edf8 100%);
  font-family: "Open Sans", "Noto Sans", sans-serif;
  font-size: 14.500px;
  color: #1b1b1b;
}
.weather { display: flex; width: 343px; margin-left: 20px; align-items: center; }
.weather svg { margin-top: -13px; }
.wtext { display: flex; flex-direction: column; margin: 1px 0 0 -1px; line-height: 20px; letter-spacing: -0.2px; }
.wtext span + span { color: #5b6068; }
.wbadge { font: 14px "Open Sans"; fill: #fff; text-anchor: middle; }
.win { width: 29px; height: 29px; margin-top: 2px; }
.search {
  display: flex;
  align-items: center;
  width: 273px;
  height: 39px;
  margin: 1px 0 0 18px;
  padding: 0 3px 0 13px;
  border: 1px solid #c5cde0;
  border-bottom-color: #a8aec0;
  border-radius: 20px;
  background: #f3f6fe;
  font-size: 16.500px;
  color: #60646c;
}
.search span { margin: 1px 0 0 12px; letter-spacing: -0.3px; }
.zen { width: 58px; height: 30px; margin: 2px 0 0 auto; }
.apps-row { display: flex; margin: 1px 0 0 3.500px; }
.app { position: relative; display: flex; align-items: center; justify-content: center; width: 55px; height: 48px; }
.app > svg { width: 30px; height: 30px; z-index: 1; }
.run::after { content: ""; position: absolute; left: 24px; bottom: 0; width: 8px; height: 4px; border-radius: 2px; background: #7d818b; }
.run:nth-child(3)::after { left: 21.500px; width: 12px; }
.active::before { content: ""; position: absolute; left: 4px; top: 0; width: 47px; height: 48px; border-radius: 5px; background: #eceff9; }
.active::after { left: 19px; width: 17px; background: #0078d4; }
.avatar { position: absolute; left: 28.500px; top: 3px; width: 20px; height: 20px; z-index: 2; }
.count { position: absolute; left: 21px; top: 3px; z-index: 2; width: 34px; height: 20px; border-radius: 10px; background: #0078d4; color: #fff; text-align: center; font-size: 14px; line-height: 20px; }
.word { font: bold 13px "Liberation Sans"; fill: #fff; text-anchor: middle; }
.tray { position: absolute; left: 1541px; right: 19px; top: 1px; height: 56px; display: flex; align-items: center; }
.two { display: flex; flex-direction: column; line-height: 20px; letter-spacing: -0.1px; }
.up { width: 14px; height: 9px; }
.cloud { width: 21px; height: 17px; margin-left: 22px; }
.sync { width: 21px; height: 21px; margin-left: 20px; }
.lang { width: 40px; margin-left: 16px; align-items: center; }
.wifi { width: 20px; height: 16px; margin-left: 18px; }
.snd { width: 21px; height: 18px; margin-left: 10px; }
.bat { width: 21px; height: 18px; margin-left: 9px; }
.clock { margin-left: auto; align-items: flex-end; }
```
